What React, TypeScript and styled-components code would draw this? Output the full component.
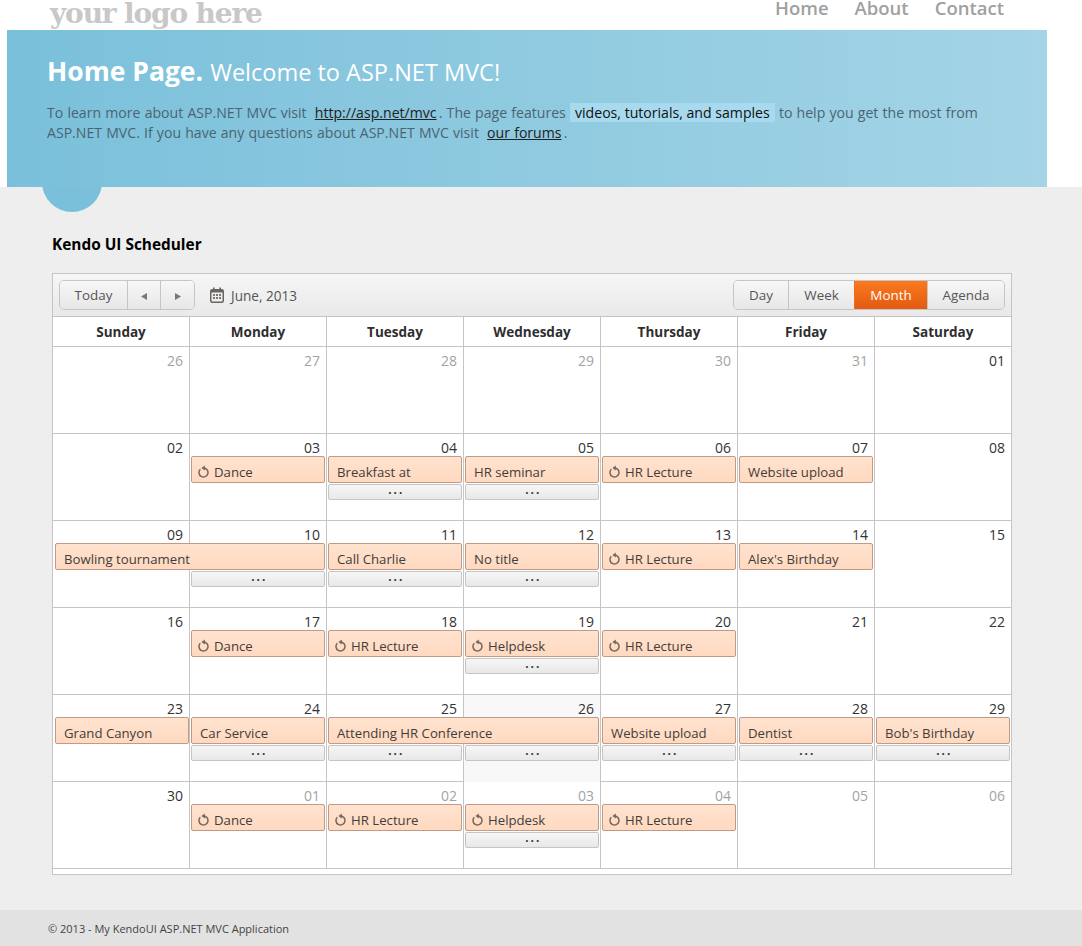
import React, { FunctionComponent } from 'react';
import styled, { createGlobalStyle } from 'styled-components';

const FONT = `'Open Sans', 'Noto Sans', sans-serif`;

const GlobalStyle = createGlobalStyle`
    html, body {
        margin: 0;
        padding: 0;
        background: #eeeeee;
        font-family: ${FONT};
    }
    * {
        box-sizing: border-box;
    }
`;

const StyledPage = styled.div`
    position: relative;
    width: 1082px;
    height: 946px;
    overflow: hidden;
    display: flex;
    flex-direction: column;
`;

const StyledHeader = styled.header`
    height: 30px;
    background: #fff;
    display: flex;
    justify-content: space-between;
    padding: 0 78px 0 50px;
    overflow: hidden;
`;

const StyledLogo = styled.div`
    font-family: 'DejaVu Serif', serif;
    font-size: 28px;
    font-weight: 700;
    line-height: 30px;
    letter-spacing: -1.15px;
    color: #c8c8c8;
    margin-top: -1px;
`;

const StyledNav = styled.nav`
    display: flex;
    gap: 26px;
`;

const StyledNavLink = styled.a`
    font-size: 18.5px;
    font-weight: 600;
    line-height: 16px;
    color: #a0a0a0;
`;

const StyledBanner = styled.div`
    background: #fff;
    padding-left: 7px;
`;

const StyledFeatured = styled.section`
    position: relative;
    height: 157px;
    width: 1040px;
    padding: 21px 40px 0;
    background: linear-gradient(90deg, #7ac0da 0%, #a4d4e6 100%);

    &::after {
        content: '';
        position: absolute;
        left: 35px;
        top: 122px;
        width: 60px;
        height: 60px;
        border-radius: 50%;
        background: #7ac0da;
        clip-path: inset(35px 0 0 0);
    }
`;

const StyledHero = styled.h1`
    margin: 0 0 11px;
    font-size: 23.5px;
    line-height: 40px;
    font-weight: 400;
    color: #fff;

    strong {
        font-size: 26.5px;
        font-weight: 700;
        margin-right: 1px;
    }
`;

const StyledLead = styled.p`
    margin: 0;
    width: 960px;
    font-size: 14.1px;
    line-height: 20px;
    word-spacing: 0.5px;
    color: #4b6472;
`;

const StyledLeadLink = styled.a`
    margin: 0 -2px 0 4px;
    color: #222;
    text-decoration: underline;
`;

const StyledMark = styled.mark`
    padding: 0 5px;
    word-spacing: 0;
    color: #111;
    background: #a8daef;
`;

const StyledMain = styled.main`
    flex: 1;
    padding: 46px 70px 0 52px;
`;

const StyledTitle = styled.h2`
    margin: 0 0 16px;
    font-size: 15.4px;
    line-height: 24px;
    font-weight: 700;
    color: #000;
`;

const StyledScheduler = styled.div`
    width: 960px;
    height: 602px;
    background: #fff;
    border: 1px solid #c5c5c5;
`;

const StyledToolbar = styled.div`
    height: 43px;
    display: flex;
    align-items: center;
    justify-content: space-between;
    padding: 0 6px;
    background: linear-gradient(#f6f6f6, #e9e9e9);
    border-bottom: 1px solid #c5c5c5;
`;

const StyledToolbarGroup = styled.div`
    display: flex;
    align-items: center;
`;

const StyledButtonGroup = styled.div`
    display: flex;
    height: 30px;
    border: 1px solid #c5c5c5;
    border-radius: 5px;
    overflow: hidden;
`;

const StyledButton = styled.div<{ $width: number; $selected?: boolean }>`
    width: ${({ $width }) => $width}px;
    display: flex;
    align-items: center;
    justify-content: center;
    font-size: 13.4px;
    color: ${({ $selected }) => ($selected ? '#fff' : '#555')};
    background: ${({ $selected }) =>
        $selected ? 'linear-gradient(#fb7a1e, #e25a10)' : 'linear-gradient(#f7f7f7, #e7e7e7)'};
    border-left: 1px solid ${({ $selected }) => ($selected ? '#f06c18' : '#c5c5c5')};

    &:first-child {
        border-left: 0;
    }

    svg {
        margin-top: 2px;
    }
`;

const StyledDateLabel = styled.div`
    display: flex;
    align-items: center;
    gap: 7px;
    margin-left: 15px;
    font-size: 13.6px;
    color: #555;
`;

const StyledDayNames = styled.div`
    display: grid;
    grid-template-columns: 136px repeat(6, 137px);
    height: 30px;
    border-bottom: 1px solid #c5c5c5;
`;

const StyledDayName = styled.div`
    display: flex;
    align-items: center;
    justify-content: center;
    font-size: 13.5px;
    font-weight: 700;
    color: #2e2e2e;
    border-left: 1px solid #c5c5c5;

    &:first-child {
        border-left: 0;
    }
`;

const StyledWeek = styled.div`
    display: grid;
    grid-template-columns: 136px repeat(6, 137px);
    grid-template-rows: 22px 27px 1px 16px 21px;
    height: 87px;
    border-bottom: 1px solid #c5c5c5;
`;

const StyledCell = styled.div<{ $col: number; $today?: boolean }>`
    grid-column: ${({ $col }) => $col + 1};
    grid-row: 1 / -1;
    display: flex;
    justify-content: flex-end;
    align-items: flex-start;
    padding: 5px 6px 0 0;
    font-size: 14px;
    line-height: 17px;
    background: ${({ $today }) => ($today ? '#f8f8f8' : 'transparent')};
    border-left: ${({ $col }) => ($col === 0 ? '0' : '1px solid #c5c5c5')};
`;

const StyledDayNumber = styled.span<{ $muted?: boolean }>`
    color: ${({ $muted }) => ($muted ? '#a3a3a3' : '#333')};
`;

const StyledEvent = styled.div<{ $col: number; $span: number; $recurring?: boolean }>`
    grid-column: ${({ $col, $span }) => `${$col + 1} / span ${$span}`};
    grid-row: 2;
    z-index: 1;
    display: flex;
    align-items: center;
    gap: 5px;
    margin: 0 ${({ $col, $span }) => ($col === 0 && $span === 1 ? '0' : '1px')} 0 2px;
    padding: 4px 0 0 ${({ $recurring }) => ($recurring ? '6px' : '8px')};
    font-size: 13.2px;
    white-space: nowrap;
    color: #443c3a;
    background: linear-gradient(#ffe3cf, #ffd9c0);
    border: 1px solid #c09a84;
    border-radius: 2px;
`;

const StyledMore = styled.div<{ $col: number }>`
    grid-column: ${({ $col }) => $col + 1};
    grid-row: 4;
    z-index: 1;
    display: flex;
    align-items: flex-start;
    justify-content: center;
    margin: 0 ${({ $col }) => ($col === 0 ? '0' : '1px')} 0 2px;
    padding-left: 2px;
    font-size: 14px;
    font-weight: 600;
    line-height: 8px;
    letter-spacing: 1.5px;
    color: #333;
    background: linear-gradient(#f6f6f6, #e8e8e8);
    border: 1px solid #c5c5c5;
    border-radius: 2px;
`;

const StyledFooter = styled.footer`
    height: 36px;
    display: flex;
    align-items: center;
    padding-left: 48px;
    font-size: 11px;
    color: #444;
    background: #e2e2e2;
`;

const RecurringIcon: FunctionComponent = () => (
    <svg width='11' height='13' viewBox='0 0 11 13' fill='none'>
        <path d='M2.3 4.3a4.5 4.5 0 1 0 3.2-1.3' stroke='#74675e' strokeWidth='1.5' />
        <path d='M3.4 3l3.4-2.6v5.2z' fill='#74675e' />
    </svg>
);

const CalendarIcon: FunctionComponent = () => (
    <svg width='14' height='16' viewBox='0 0 14 16' fill='none'>
        <rect x='0.75' y='2.75' width='12.5' height='12.5' rx='1.5' stroke='#6a6461' strokeWidth='1.5' />
        <path d='M1 3h12v2.5H1z' fill='#6a6461' />
        <path d='M3 0.5h1.6v3.5H3zM9.4 0.5H11v3.5H9.4z' fill='#6a6461' />
        <path d='M3 7h2v2H3zM6 7h2v2H6zM9 7h2v2H9zM3 10h2v2H3zM6 10h2v2H6zM9 10h2v2H9z' fill='#7d7875' />
    </svg>
);

const ArrowLeft: FunctionComponent = () => (
    <svg width='6' height='7' viewBox='0 0 6 7'>
        <path d='M6 0v7L0 3.5z' fill='#777' />
    </svg>
);

const ArrowRight: FunctionComponent = () => (
    <svg width='6' height='7' viewBox='0 0 6 7'>
        <path d='M0 0v7l6-3.5z' fill='#777' />
    </svg>
);

const DAY_NAMES = ['Sunday', 'Monday', 'Tuesday', 'Wednesday', 'Thursday', 'Friday', 'Saturday'];

interface IEvent {
    readonly col: number;
    readonly span?: number;
    readonly title: string;
    readonly recurring?: boolean;
}

interface IWeek {
    readonly days: string[];
    readonly muted?: number[];
    readonly events: IEvent[];
    readonly more: number[];
    readonly today?: number;
}

const WEEKS: IWeek[] = [
    {
        days: ['26', '27', '28', '29', '30', '31', '01'],
        muted: [0, 1, 2, 3, 4, 5],
        events: [],
        more: [],
    },
    {
        days: ['02', '03', '04', '05', '06', '07', '08'],
        events: [
            { col: 1, title: 'Dance', recurring: true },
            { col: 2, title: 'Breakfast at' },
            { col: 3, title: 'HR seminar' },
            { col: 4, title: 'HR Lecture', recurring: true },
            { col: 5, title: 'Website upload' },
        ],
        more: [2, 3],
    },
    {
        days: ['09', '10', '11', '12', '13', '14', '15'],
        events: [
            { col: 0, span: 2, title: 'Bowling tournament' },
            { col: 2, title: 'Call Charlie' },
            { col: 3, title: 'No title' },
            { col: 4, title: 'HR Lecture', recurring: true },
            { col: 5, title: "Alex's Birthday" },
        ],
        more: [1, 2, 3],
    },
    {
        days: ['16', '17', '18', '19', '20', '21', '22'],
        events: [
            { col: 1, title: 'Dance', recurring: true },
            { col: 2, title: 'HR Lecture', recurring: true },
            { col: 3, title: 'Helpdesk', recurring: true },
            { col: 4, title: 'HR Lecture', recurring: true },
        ],
        more: [3],
    },
    {
        days: ['23', '24', '25', '26', '27', '28', '29'],
        today: 3,
        events: [
            { col: 0, title: 'Grand Canyon' },
            { col: 1, title: 'Car Service' },
            { col: 2, span: 2, title: 'Attending HR Conference' },
            { col: 4, title: 'Website upload' },
            { col: 5, title: 'Dentist' },
            { col: 6, title: "Bob's Birthday" },
        ],
        more: [1, 2, 3, 4, 5, 6],
    },
    {
        days: ['30', '01', '02', '03', '04', '05', '06'],
        muted: [1, 2, 3, 4, 5, 6],
        events: [
            { col: 1, title: 'Dance', recurring: true },
            { col: 2, title: 'HR Lecture', recurring: true },
            { col: 3, title: 'Helpdesk', recurring: true },
            { col: 4, title: 'HR Lecture', recurring: true },
        ],
        more: [3],
    },
];

const App: FunctionComponent = () => (
    <StyledPage>
        <GlobalStyle />
        <StyledHeader>
            <StyledLogo>your logo here</StyledLogo>
            <StyledNav>
                <StyledNavLink>Home</StyledNavLink>
                <StyledNavLink>About</StyledNavLink>
                <StyledNavLink>Contact</StyledNavLink>
            </StyledNav>
        </StyledHeader>
        <StyledBanner>
            <StyledFeatured>
                <StyledHero>
                    <strong>Home Page.</strong> Welcome to ASP.NET MVC!
                </StyledHero>
                <StyledLead>
                    To learn more about ASP.NET MVC visit <StyledLeadLink>http://asp.net/mvc</StyledLeadLink> . The page
                    features <StyledMark>videos, tutorials, and samples</StyledMark> to help you get the most from
                    ASP.NET MVC. If you have any questions about ASP.NET MVC visit{' '}
                    <StyledLeadLink>our forums</StyledLeadLink> .
                </StyledLead>
            </StyledFeatured>
        </StyledBanner>
        <StyledMain>
            <StyledTitle>Kendo UI Scheduler</StyledTitle>
            <StyledScheduler>
                <StyledToolbar>
                    <StyledToolbarGroup>
                        <StyledButtonGroup>
                            <StyledButton $width={67}>Today</StyledButton>
                            <StyledButton $width={33}>
                                <ArrowLeft />
                            </StyledButton>
                            <StyledButton $width={34}>
                                <ArrowRight />
                            </StyledButton>
                        </StyledButtonGroup>
                        <StyledDateLabel>
                            <CalendarIcon />
                            June, 2013
                        </StyledDateLabel>
                    </StyledToolbarGroup>
                    <StyledButtonGroup>
                        <StyledButton $width={54}>Day</StyledButton>
                        <StyledButton $width={66}>Week</StyledButton>
                        <StyledButton $width={73} $selected>
                            Month
                        </StyledButton>
                        <StyledButton $width={77}>Agenda</StyledButton>
                    </StyledButtonGroup>
                </StyledToolbar>
                <StyledDayNames>
                    {DAY_NAMES.map((name) => (
                        <StyledDayName key={name}>{name}</StyledDayName>
                    ))}
                </StyledDayNames>
                {WEEKS.map((week, weekIndex) => (
                    <StyledWeek key={weekIndex}>
                        {week.days.map((day, col) => (
                            <StyledCell key={col} $col={col} $today={week.today === col}>
                                <StyledDayNumber $muted={week.muted?.includes(col)}>{day}</StyledDayNumber>
                            </StyledCell>
                        ))}
                        {week.events.map((event) => (
                            <StyledEvent
                                key={event.col}
                                $col={event.col}
                                $span={event.span ?? 1}
                                $recurring={event.recurring}
                            >
                                {event.recurring && <RecurringIcon />}
                                {event.title}
                            </StyledEvent>
                        ))}
                        {week.more.map((col) => (
                            <StyledMore key={col} $col={col}>
                                ...
                            </StyledMore>
                        ))}
                    </StyledWeek>
                ))}
            </StyledScheduler>
        </StyledMain>
        <StyledFooter>© 2013 - My KendoUI ASP.NET MVC Application</StyledFooter>
    </StyledPage>
);

export default App;
